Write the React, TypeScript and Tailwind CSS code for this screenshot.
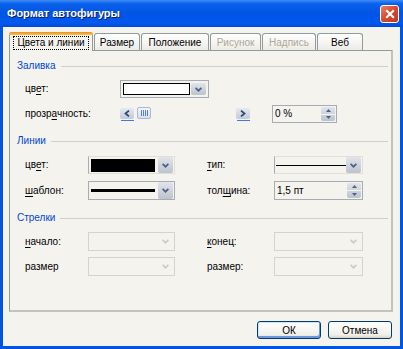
import React from "react";

const Chevron = ({ color = "#4D6185" }: { color?: string }) => (
  <svg width="7" height="5" viewBox="0 0 7 5">
    <path d="M0.6 0.8 L3.5 3.7 L6.4 0.8" fill="none" stroke={color} strokeWidth="1.7" />
  </svg>
);

function DropBtn({ disabled = false }: { disabled?: boolean }) {
  return (
    <div
      className={
        disabled
          ? "w-[15px] h-full flex items-center justify-center"
          : "w-[15px] h-full flex items-center justify-center rounded-[2px] bg-[linear-gradient(#E1E4EA,#BCC3CE)]"
      }
    >
      <Chevron color={disabled ? "#CFCDC2" : "#4D6185"} />
    </div>
  );
}

function SpinBtn() {
  return (
    <div className="w-[14px] h-full flex flex-col rounded-[2px] bg-[linear-gradient(#E1E4EA,#BCC3CE)]">
      <div className="flex-1 flex items-center justify-center border-b border-[#F4F3EE]">
        <svg width="5" height="3" viewBox="0 0 5 3"><path d="M0 3 L2.5 0 L5 3 Z" fill="#4D6185" /></svg>
      </div>
      <div className="flex-1 flex items-center justify-center">
        <svg width="5" height="3" viewBox="0 0 5 3"><path d="M0 0 L2.5 3 L5 0 Z" fill="#4D6185" /></svg>
      </div>
    </div>
  );
}

function Heading({ text }: { text: string }) {
  return (
    <div className="h-[14px] flex items-center gap-[5px]">
      <span className="text-[#0046D5] leading-[14px]">{text}</span>
      <div className="flex-1 h-px bg-[#D0D0C6]" />
    </div>
  );
}

function Label({ pre, u, post, w }: { pre: string; u?: string; post?: string; w: string }) {
  return (
    <div className={`${w} shrink-0 leading-[14px] text-black`}>
      {pre}
      {u ? <span className="underline underline-offset-2">{u}</span> : null}
      {post}
    </div>
  );
}

function ArrowBtn({ dir }: { dir: "l" | "r" }) {
  return (
    <div className="flex flex-col items-center">
      <div className="w-[14px] h-[11px] rounded-[2px] bg-[linear-gradient(#E6EAF0,#C3CAD6)] flex items-center justify-center">
        <svg width="6" height="7" viewBox="0 0 6 7">
          <path d={dir === "l" ? "M5 0.6 L1.5 3.5 L5 6.4" : "M1 0.6 L4.5 3.5 L1 6.4"} fill="none" stroke="#2E4A80" strokeWidth="1.8" />
        </svg>
      </div>
      <div className="w-[13px] h-px bg-[#3D7BE0] mt-[1px]" />
    </div>
  );
}

export default function App() {
  const tab =
    "h-[17px] flex items-center justify-center border border-b-0 border-[#919B9C] rounded-t-[3px] bg-[linear-gradient(#FFFFFF,#ECEBE6)]";
  return (
    <div className="w-[403px] h-[349px] flex flex-col font-['Liberation_Sans',Arial,sans-serif] text-[10px] select-none">
      {/* Title bar */}
      <div className="h-[27px] shrink-0 flex items-center pl-[7px] pr-[4px] bg-[linear-gradient(to_bottom,#3E8DF6_0%,#0A5FEA_14%,#0055E5_50%,#0058EE_86%,#0049D2_100%)]">
        <span className="text-white font-bold text-[11px] [text-shadow:1px_1px_0_#0A1E6A]">
          Формат автофигуры
        </span>
        <div className="ml-auto w-[19px] h-[18px] rounded-[3px] border border-white bg-[linear-gradient(135deg,#E8826A,#D8482C_50%,#C33A1C)] flex items-center justify-center">
          <svg width="10" height="10" viewBox="0 0 10 10">
            <path d="M1.2 1.2 L8.8 8.8 M8.8 1.2 L1.2 8.8" stroke="white" strokeWidth="2.2" />
          </svg>
        </div>
      </div>

      {/* Body */}
      <div className="flex-1 flex flex-col border-x-[3px] border-b-[3px] border-[#0055E5] bg-[#F4F3EE] pl-[6px] pr-[7px] pt-[5px]">
        {/* Tabs */}
        <div className="flex items-end gap-[1px] h-[18px]">
          <div className="w-[84px] flex items-center justify-center border-x border-[#919B9C] rounded-t-[3px] bg-[#F4F3EE] relative -mb-px z-10 h-[19px]">
            <div className="absolute top-0 left-[-1px] right-[-1px] h-[3px] rounded-t-[3px] bg-[linear-gradient(#E68B2C,#FFC73C)]" />
            <span className="mt-[2px] px-[3px] leading-[12px] outline-dotted outline-1 outline-black text-black">Цвета и линии</span>
          </div>
          <div className={`w-[46px] ${tab} text-black`}>Размер</div>
          <div className={`w-[68px] ${tab} text-black`}>Положение</div>
          <div className={`w-[51px] ${tab} text-[#ACA899]`}>Рисунок</div>
          <div className={`w-[54px] ${tab} text-[#ACA899]`}>Надпись</div>
          <div className={`w-[46px] ${tab} text-black`}>Веб</div>
        </div>

        {/* Panel */}
        <div className="h-[262px] shrink-0 border-l border-t border-[#919B9C] border-r-2 border-b-2 border-r-[#C5C3B8] border-b-[#C5C3B8] pl-[7px] pr-[3px] pt-[8px] flex flex-col">
          <Heading text="Заливка" />
          <div className="mt-[7px] h-[18px] flex items-center pl-[8px]">
            <Label w="w-[95px]" pre="цв" u="е" post="т:" />
            <div className="w-[89px] h-full border border-[#A5ACB5] flex items-center p-[2px] gap-[1px]">
              <div className="flex-1 h-[12px] bg-white border border-black" />
              <DropBtn />
            </div>
          </div>
          <div className="mt-[7px] h-[18px] flex items-center pl-[8px]">
            <Label w="w-[95px]" pre="прозр" u="а" post="чность:" />
            <ArrowBtn dir="l" />
            <div className="ml-[3px] w-[14px] h-[12px] mb-[2px] rounded-[2px] border border-[#A9B8D2] bg-[linear-gradient(#F2F5FA,#D7DFEB)] flex items-center justify-center gap-[1px]">
              <div className="w-px h-[6px] bg-[#5A7EC0]" />
              <div className="w-px h-[6px] bg-[#5A7EC0]" />
              <div className="w-px h-[6px] bg-[#5A7EC0]" />
              <div className="w-px h-[6px] bg-[#5A7EC0]" />
            </div>
            <div className="w-[85px]" />
            <ArrowBtn dir="r" />
            <div className="ml-[22px] w-[65px] h-full border border-[#A5ACB5] bg-[#F4F3EE] flex items-center pl-[2px] pr-[1px] py-[1px]">
              <span className="flex-1 text-black leading-[12px]">0 %</span>
              <SpinBtn />
            </div>
          </div>

          <div className="mt-[11px]">
            <Heading text="Линии" />
          </div>
          <div className="mt-[8px] h-[18px] flex items-center pl-[8px]">
            <Label w="w-[63px]" pre="цв" u="е" post="т:" />
            <div className="w-[87px] h-full border border-[#E2E0D6] border-l-[#A5ACB5] flex items-center pl-[2px] pr-[1px] gap-[3px]">
              <div className="flex-1 h-[13px] bg-black" />
              <DropBtn />
            </div>
            <div className="w-[32px]" />
            <Label w="w-[67px]" pre="" u="т" post="ип:" />
            <div className="w-[89px] h-full border border-[#E2E0D6] border-l-[#A5ACB5] flex items-center pl-[1px] pr-[1px]">
              <div className="flex-1 h-px bg-black" />
              <DropBtn />
            </div>
          </div>
          <div className="mt-[7px] h-[19px] flex items-center pl-[8px]">
            <Label w="w-[63px]" pre="" u="ш" post="аблон:" />
            <div className="w-[87px] h-full border border-[#A5ACB5] flex items-center pl-[2px] pr-[1px] gap-[3px]">
              <div className="flex-1 h-[3px] bg-black" />
              <DropBtn />
            </div>
            <div className="w-[32px]" />
            <Label w="w-[67px]" pre="тол" u="щ" post="ина:" />
            <div className="w-[89px] h-full border border-[#A5ACB5] flex items-center pl-[2px] pr-[1px] py-[1px]">
              <span className="flex-1 text-black leading-[12px]">1,5 пт</span>
              <SpinBtn />
            </div>
          </div>

          <div className="mt-[11px]">
            <Heading text="Стрелки" />
          </div>
          <div className="mt-[7px] h-[19px] flex items-center pl-[8px]">
            <Label w="w-[63px]" pre="" u="н" post="ачало:" />
            <div className="w-[87px] h-full border border-[#D5D3CA] flex items-center justify-end pr-[1px]">
              <DropBtn disabled />
            </div>
            <div className="w-[32px]" />
            <Label w="w-[67px]" pre="" u="к" post="онец:" />
            <div className="w-[89px] h-full border border-[#D5D3CA] flex items-center justify-end pr-[1px]">
              <DropBtn disabled />
            </div>
          </div>
          <div className="mt-[6px] h-[19px] flex items-center pl-[8px]">
            <Label w="w-[63px]" pre="размер" />
            <div className="w-[87px] h-full border border-[#D5D3CA] flex items-center justify-end pr-[1px]">
              <DropBtn disabled />
            </div>
            <div className="w-[32px]" />
            <Label w="w-[67px]" pre="размер:" />
            <div className="w-[89px] h-full border border-[#D5D3CA] flex items-center justify-end pr-[1px]">
              <DropBtn disabled />
            </div>
          </div>
        </div>

        {/* Buttons */}
        <div className="mt-[9px] flex justify-end gap-[7px] pr-px">
          <div className="w-[64px] h-[18px] rounded-[3px] border border-[#003C74] bg-[linear-gradient(#FFFFFF,#F0F0EA_80%,#D6D0C5)] shadow-[inset_-1px_-2px_0_#6D95E0,inset_1px_1px_0_#CEE7FF] flex items-center justify-center text-black">
            ОК
          </div>
          <div className="w-[64px] h-[18px] rounded-[3px] border border-[#003C74] bg-[linear-gradient(#FFFFFF,#F0F0EA_80%,#D6D0C5)] flex items-center justify-center text-black">
            Отмена
          </div>
        </div>
      </div>
    </div>
  );
}
